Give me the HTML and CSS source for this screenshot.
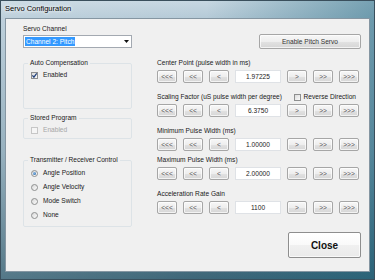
FILE: index.html
```html
<!DOCTYPE html>
<html lang="en">
<head>
    <meta charset="UTF-8">
    <title>Servo Configuration</title>
    <link rel="stylesheet" href="styles.css">
</head>
<body>
    <div class="window">
        <div class="title-bar">Servo Configuration</div>
        <div class="client">
            <div class="top-row">
                <div class="channel">
                    <div class="label">Servo Channel</div>
                    <div class="combo">
                        <span class="combo-sel">Channel 2: Pitch</span>
                        <svg class="combo-arrow" width="5" height="3" viewBox="0 0 5 3"><polygon points="0,0 5,0 2.5,3" fill="#111"/></svg>
                    </div>
                </div>
                <button class="btn btn-enable">Enable Pitch Servo</button>
            </div>

            <div class="columns">
                <div class="left-col">
                    <fieldset class="group group-auto">
                        <legend>Auto Compensation</legend>
                        <label class="check"><span class="box"><svg width="7" height="7" viewBox="0 0 7 7"><polyline points="1.4,3.4 2.9,5.2 5.7,1.3" fill="none" stroke="#21407a" stroke-width="1.2"/></svg></span>Enabled</label>
                    </fieldset>

                    <fieldset class="group group-stored">
                        <legend>Stored Program</legend>
                        <label class="check disabled"><span class="box"></span>Enabled</label>
                    </fieldset>

                    <fieldset class="group group-tx">
                        <legend>Transmitter / Receiver Control</legend>
                        <label class="check"><span class="radio on"></span>Angle Position</label>
                        <label class="check"><span class="radio"></span>Angle Velocity</label>
                        <label class="check"><span class="radio"></span>Mode Switch</label>
                        <label class="check"><span class="radio"></span>None</label>
                    </fieldset>
                </div>

                <div class="right-col">
                    <div class="field">
                        <div class="label">Center Point (pulse width in ms)</div>
                        <div class="stepper">
                            <button class="btn step">&lt;&lt;&lt;</button>
                            <button class="btn step">&lt;&lt;</button>
                            <button class="btn step">&lt;</button>
                            <div class="value">1.97225</div>
                            <button class="btn step">&gt;</button>
                            <button class="btn step">&gt;&gt;</button>
                            <button class="btn step">&gt;&gt;&gt;</button>
                        </div>
                    </div>

                    <div class="field">
                        <div class="label label-row">
                            <span>Scaling Factor (uS pulse width per degree)</span>
                            <label class="check reverse"><span class="box"></span>Reverse Direction</label>
                        </div>
                        <div class="stepper">
                            <button class="btn step">&lt;&lt;&lt;</button>
                            <button class="btn step">&lt;&lt;</button>
                            <button class="btn step">&lt;</button>
                            <div class="value">6.3750</div>
                            <button class="btn step">&gt;</button>
                            <button class="btn step">&gt;&gt;</button>
                            <button class="btn step">&gt;&gt;&gt;</button>
                        </div>
                    </div>

                    <div class="field">
                        <div class="label">Minimum Pulse Width (ms)</div>
                        <div class="stepper">
                            <button class="btn step">&lt;&lt;&lt;</button>
                            <button class="btn step">&lt;&lt;</button>
                            <button class="btn step">&lt;</button>
                            <div class="value">1.00000</div>
                            <button class="btn step">&gt;</button>
                            <button class="btn step">&gt;&gt;</button>
                            <button class="btn step">&gt;&gt;&gt;</button>
                        </div>
                    </div>

                    <div class="field field-tight">
                        <div class="label">Maximum Pulse Width (ms)</div>
                        <div class="stepper">
                            <button class="btn step">&lt;&lt;&lt;</button>
                            <button class="btn step">&lt;&lt;</button>
                            <button class="btn step">&lt;</button>
                            <div class="value">2.00000</div>
                            <button class="btn step">&gt;</button>
                            <button class="btn step">&gt;&gt;</button>
                            <button class="btn step">&gt;&gt;&gt;</button>
                        </div>
                    </div>

                    <div class="field">
                        <div class="label">Acceleration Rate Gain</div>
                        <div class="stepper">
                            <button class="btn step">&lt;&lt;&lt;</button>
                            <button class="btn step">&lt;&lt;</button>
                            <button class="btn step">&lt;</button>
                            <div class="value">1100</div>
                            <button class="btn step">&gt;</button>
                            <button class="btn step">&gt;&gt;</button>
                            <button class="btn step">&gt;&gt;&gt;</button>
                        </div>
                    </div>

                    <button class="btn btn-close">Close</button>
                </div>
            </div>
        </div>
    </div>
</body>
</html>
```

FILE: styles.css
```css
body {
    margin: 0;
    font-family: 'Liberation Sans', Arial, sans-serif;
    font-size: 6.6px;
    color: #1a1a1a;
}
.window {
    width: 375px;
    height: 280px;
    box-sizing: border-box;
    padding: 0 5px 8px 5px;
    display: flex;
    flex-direction: column;
    background:
        linear-gradient(to right, rgba(255,255,255,0.12), rgba(255,255,255,0) 55%, rgba(20,95,120,0.45)),
        linear-gradient(to bottom, #c8d8e2 0, #b5cad7 18px, #88a6b6 55%, #3c6577 100%);
    box-shadow: inset 0 0 0 1px #3a4f5c;
}
.title-bar {
    height: 18px;
    line-height: 18px;
    font-size: 7.5px;
    color: #000;
    text-shadow: 0 0 3px #fff, 0 0 5px #fff;
}
.client {
    flex: 1;
    background-color: #f0f0f0;
    border: 1px solid #8596a2;
    padding: 6px 8px 0 17px;
}
.label {
    line-height: 8px;
    white-space: nowrap;
}
.top-row {
    display: flex;
    justify-content: space-between;
    align-items: flex-start;
}
.channel {
    width: 109px;
}
.combo {
    margin-top: 2px;
    height: 13px;
    box-sizing: border-box;
    border: 1px solid #a3a9b1;
    background-color: #fff;
    display: flex;
    align-items: center;
    justify-content: space-between;
    padding: 0 2px 0 1px;
}
.combo-sel {
    background-color: #3399ff;
    color: #fff;
    line-height: 9px;
    padding: 0 1px;
}
.btn {
    font-family: inherit;
    font-size: inherit;
    color: #333;
    padding: 0;
    border: 1px solid #a6a6a6;
    border-radius: 2px;
    background: linear-gradient(to bottom, #f7f7f7 0%, #eeeeee 50%, #e2e2e2 51%, #d6d6d6 100%);
    box-shadow: inset 0 0 0 1px rgba(255,255,255,0.7);
}
.btn-enable {
    margin-top: 9px;
    width: 102px;
    height: 15px;
}
.columns {
    display: flex;
    gap: 25px;
    margin-top: 10px;
}
.left-col {
    width: 109px;
}
.group {
    margin: 0;
    border: 1px solid #dde3e7;
    border-radius: 2px;
    padding: 4px 4px 0 7px;
    min-width: 0;
}
.group legend {
    padding: 0 2px;
    margin-left: -3px;
    line-height: 8px;
}
.group-auto {
    padding-bottom: 29px;
}
.group-stored {
    margin-top: 5px;
    padding-bottom: 4px;
}
.group-tx {
    margin-top: 17px;
    padding-top: 5px;
    padding-bottom: 7px;
    display: flex;
    flex-direction: column;
    gap: 6px;
}
.check {
    display: flex;
    align-items: center;
    gap: 5px;
    line-height: 8px;
    white-space: nowrap;
}
.check.disabled {
    color: #a6a6a6;
}
.box {
    width: 7px;
    height: 7px;
    box-sizing: border-box;
    border: 1px solid #8e8f8f;
    background: linear-gradient(135deg, #dcdcdc, #fbfbfb);
    display: flex;
    align-items: center;
    justify-content: center;
}
.box svg {
    flex: none;
}
.check.disabled .box {
    border-color: #c6c6c6;
    background: #f5f5f5;
}
.radio {
    width: 7px;
    height: 7px;
    box-sizing: border-box;
    border: 1px solid #8e8f8f;
    border-radius: 50%;
    background: linear-gradient(135deg, #d8d8d8, #fbfbfb);
    display: flex;
    align-items: center;
    justify-content: center;
}
.radio.on::after {
    content: '';
    width: 3px;
    height: 3px;
    border-radius: 50%;
    background: radial-gradient(circle at 35% 35%, #8cc0ee, #1d5a9c);
}
.right-col {
    width: 204px;
    display: flex;
    flex-direction: column;
}
.field {
    margin-top: 10px;
}
.field:first-child {
    margin-top: 0;
}
.field-tight {
    margin-top: 5px;
}
.label-row {
    display: flex;
    align-items: center;
}
.reverse {
    margin-left: auto;
    margin-right: 5px;
    gap: 3px;
}
.stepper {
    margin-top: 3px;
    display: flex;
    gap: 6px;
    height: 13px;
}
.step {
    width: 20px;
    color: #555;
}
.value {
    width: 46px;
    box-sizing: border-box;
    border: 1px solid #dfe2e6;
    background-color: #fff;
    text-align: center;
    line-height: 11px;
}
.btn-close {
    align-self: flex-end;
    margin-top: 18px;
    width: 73px;
    height: 26px;
    font-size: 10px;
    font-weight: bold;
    color: #111;
    border-color: #8e8e8e;
    background: linear-gradient(to bottom, #ffffff 0%, #f9f9f9 50%, #f0f0f0 51%, #eaeaea 100%);
}
```
